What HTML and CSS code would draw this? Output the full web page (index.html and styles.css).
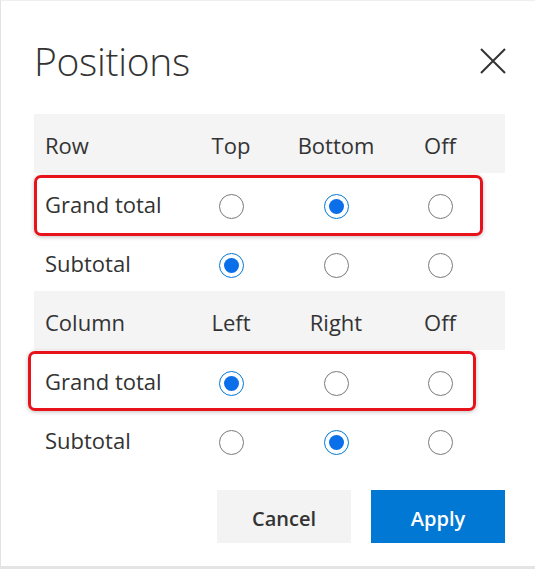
FILE: index.html
```html
<!DOCTYPE html>
<html>
<head>
<meta charset="utf-8">
<link rel="stylesheet" href="styles.css">
</head>
<body>
<div class="dialog">
  <div class="header">
    <h1 class="title">Positions</h1>
    <button class="close" aria-label="Close">
      <svg width="26" height="26" viewBox="0 0 26 26"><path d="M1 1 L25 25 M25 1 L1 25" stroke="#333" stroke-width="2" fill="none"/></svg>
    </button>
  </div>
  <div class="table">
    <div class="row head">
      <div class="label">Row</div><div class="cell">Top</div><div class="cell">Bottom</div><div class="cell">Off</div>
    </div>
    <div class="row">
      <div class="label">Grand total</div>
      <div class="cell"><span class="radio"></span></div>
      <div class="cell"><span class="radio on"></span></div>
      <div class="cell"><span class="radio"></span></div>
      <div class="highlight hl1"></div>
    </div>
    <div class="row">
      <div class="label">Subtotal</div>
      <div class="cell"><span class="radio on"></span></div>
      <div class="cell"><span class="radio"></span></div>
      <div class="cell"><span class="radio"></span></div>
    </div>
    <div class="row head">
      <div class="label">Column</div><div class="cell">Left</div><div class="cell">Right</div><div class="cell">Off</div>
    </div>
    <div class="row">
      <div class="label">Grand total</div>
      <div class="cell"><span class="radio on"></span></div>
      <div class="cell"><span class="radio"></span></div>
      <div class="cell"><span class="radio"></span></div>
      <div class="highlight hl2"></div>
    </div>
    <div class="row">
      <div class="label">Subtotal</div>
      <div class="cell"><span class="radio"></span></div>
      <div class="cell"><span class="radio on"></span></div>
      <div class="cell"><span class="radio"></span></div>
    </div>
  </div>
  <div class="actions">
    <button class="btn cancel">Cancel</button>
    <button class="btn apply">Apply</button>
  </div>
</div>
<div class="bottom-strip"></div>
</body>
</html>
```
FILE: styles.css
```css
html, body {
  margin: 0;
  padding: 0;
  background: #ffffff;
}
body {
  font-family: "Open Sans", "Noto Sans", sans-serif;
  color: #333333;
  width: 535px;
  height: 569px;
  overflow: hidden;
}
.dialog {
  box-sizing: border-box;
  height: 566px;
  border-left: 1px solid #e3e3e3;
  border-top: 1px solid #efefef;
  padding: 0 30px 0 33px;
  display: flex;
  flex-direction: column;
}
.bottom-strip {
  height: 3px;
  background: #e4e4e4;
}
.header {
  display: flex;
  align-items: center;
  justify-content: space-between;
  height: 113px;
}
.title {
  margin: 0;
  font-weight: 300;
  font-size: 39px;
  color: #333;
  letter-spacing: -0.3px;
  padding-top: 6px;
}
.close {
  border: 0;
  background: none;
  padding: 0;
  width: 26px;
  height: 26px;
  margin-right: -1px;
  margin-top: 6px;
}
.close svg { display: block; }
.table {
  display: flex;
  flex-direction: column;
}
.row {
  position: relative;
  box-sizing: border-box;
  display: grid;
  grid-template-columns: 144px 106px 104px 104px 1fr;
  height: 59px;
  padding-top: 2px;
  align-items: center;
  font-size: 22px;
}
.row.head {
  background: #f4f4f4;
}
.label {
  padding-left: 11px;
}
.cell {
  display: flex;
  justify-content: center;
}
.radio {
  box-sizing: border-box;
  width: 25px;
  height: 25px;
  margin-top: 6px;
  border: 1px solid #7a7a7a;
  border-radius: 50%;
  display: flex;
  align-items: center;
  justify-content: center;
  background: #fff;
}
.radio.on {
  border-color: #0078d4;
}
.radio.on::after {
  content: "";
  width: 15px;
  height: 15px;
  border-radius: 50%;
  background: #0a6fe8;
}
.highlight {
  position: absolute;
  box-sizing: border-box;
  border: 3px solid #e8121b;
  border-radius: 7px;
  box-shadow: 0 1px 4px rgba(0,0,0,0.25);
  pointer-events: none;
}
.hl1 {
  left: 0;
  top: 2px;
  width: 449px;
  height: 61px;
}
.hl2 {
  left: -6px;
  top: 1px;
  width: 448px;
  height: 60px;
}
.actions {
  display: flex;
  justify-content: flex-end;
  gap: 20px;
  margin-top: 22px;
}
.btn {
  border: 0;
  width: 134px;
  height: 53px;
  font-family: "Open Sans", "Noto Sans", sans-serif;
  font-size: 20px;
  font-weight: 600;
  padding: 3px 0 0;
}
.cancel {
  background: #f3f3f3;
  color: #333;
}
.apply {
  background: #0078d4;
  color: #fff;
}
```
